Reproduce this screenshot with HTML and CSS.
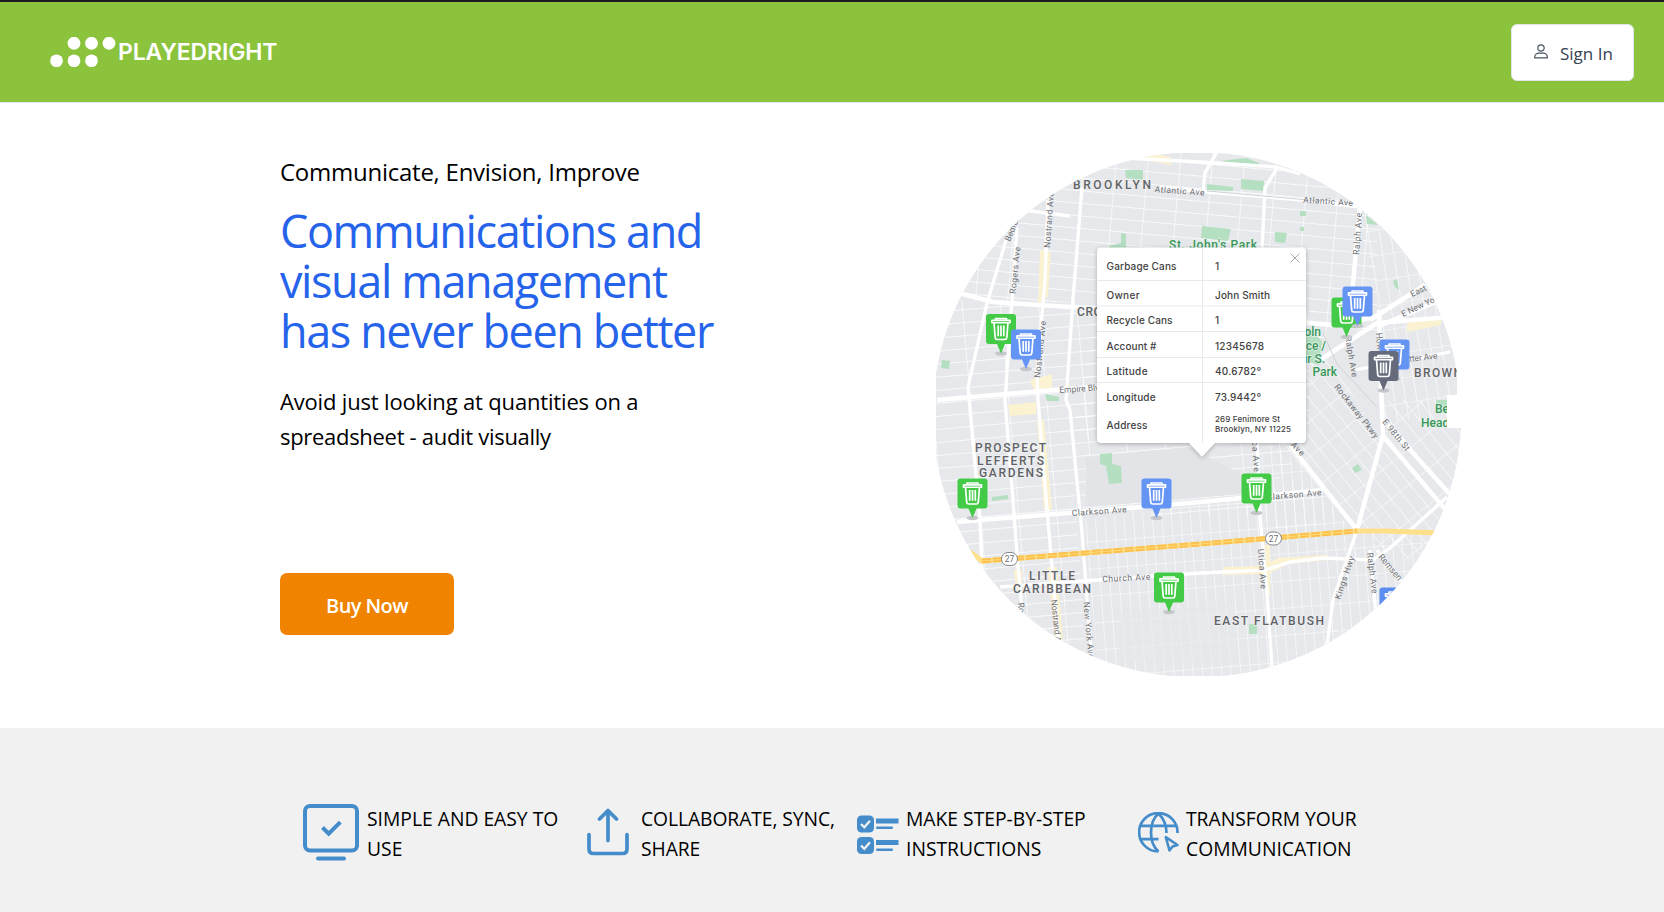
FILE: index.html
```html
<!DOCTYPE html>
<html lang="en">
<head>
<meta charset="utf-8">
<title>PlayedRight</title>
<link rel="stylesheet" href="styles.css">
</head>
<body>
<header class="topbar">
  <a class="brand">
    <svg class="brand-dots" width="66" height="30" viewBox="0 0 66 30" fill="#fff"><circle cx="24" cy="6.3" r="6.4"/><circle cx="41.5" cy="6.3" r="6.4"/><circle cx="59" cy="6.3" r="6.4"/><circle cx="6.5" cy="23.8" r="6.4"/><circle cx="24" cy="23.8" r="6.4"/><circle cx="41.5" cy="23.8" r="6.4"/></svg>
    <span class="brand-name">PLAYEDRIGHT</span>
  </a>
  <a class="signin">
    <svg width="14" height="15" viewBox="0 0 14 15" fill="none" stroke="#4b5563" stroke-width="1.2"><circle cx="7" cy="4" r="3.2"/><path d="M.7 13.9V13c0-2.4 2.2-3.9 4-3.9h4.600c1.800 0 4 1.500 4 3.900v.9z" stroke-linejoin="round"/></svg>
    <span class="signin-label">Sign In</span>
  </a>
</header>

<main class="hero">
  <section class="copy">
    <p class="eyebrow">Communicate, Envision, Improve</p>
    <h1 class="title"><span class="t1">Communications and</span><br><span class="t2">visual management</span><br><span class="t3">has never been better</span></h1>
    <p class="lead"><span class="l1">Avoid just looking at quantities on a</span><br><span class="l2">spreadsheet - audit visually</span></p>
    <a class="buy"><span class="buy-label">Buy Now</span></a>
  </section>
  <svg class="map" width="526" height="524" viewBox="936 153 526 524">
    <defs>
      <clipPath id="disc"><path d="M1175 153H1222A262.500 262.500 0 0 1 1457 373V395H1447V428H1461A262.500 262.500 0 0 1 1222 676H1170A262.500 262.500 0 0 1 1175 153Z"/></clipPath>
      <pattern id="gNorth" width="32" height="12.500" patternUnits="userSpaceOnUse" patternTransform="translate(1048 200) rotate(5)"><path d="M0 0H32M0 0V12.500" stroke="#fff" stroke-width="1.300"/></pattern>
      <pattern id="gWest" width="38" height="13" patternUnits="userSpaceOnUse" patternTransform="translate(970 400) rotate(-5)"><path d="M0 0H38M0 0V13" stroke="#fff" stroke-width="1.300"/></pattern>
      <pattern id="gSouth" width="9.500" height="27" patternUnits="userSpaceOnUse" patternTransform="translate(1085 515) rotate(-4.500)"><path d="M0 0H9.500M0 0V27" stroke="#fff" stroke-width="1.100"/></pattern>
      <pattern id="gDiag" width="12" height="28" patternUnits="userSpaceOnUse" patternTransform="translate(1383 433) rotate(-39)"><path d="M0 0H12M0 0V28" stroke="#fff" stroke-width="1.200"/></pattern>
      <pattern id="gEast" width="11" height="25" patternUnits="userSpaceOnUse" patternTransform="translate(1383 330) rotate(-9)"><path d="M0 0H11M0 0V25" stroke="#fff" stroke-width="1.200"/></pattern>
      <g id="can" fill="none" stroke="#fff" stroke-width="1.700" stroke-linejoin="round"><path d="M-5.500-10.500V-12h11v1.500M-9-7.500v-2.500H9v2.500zM-7-7.500L-5.800 8.500q.2 2 2 2h7.600q1.800 0 2-2L7-7.500M-2.800-4.500V7M0-4.500V7M2.800-4.500V7" /></g>
      <g id="pin"><ellipse cx="0" cy="24" rx="6" ry="2.200" fill="#c4c6ca" stroke="none"/><path d="M-12-15.500h24a3 3 0 0 1 3 3v24a3 3 0 0 1-3 3H4L0 24-4 14.500h-8a3 3 0 0 1-3-3v-24a3 3 0 0 1 3-3z"/><use href="#can" transform="translate(0 .2) scale(1 .93)"/></g>
    </defs>
    <g clip-path="url(#disc)">
      <rect x="930" y="150" width="540" height="530" fill="#e6e8eb"/>
      <path d="M930 150H1377V330L1310 340V307L930 300z" fill="url(#gNorth)"/>
      <path d="M930 300L1097 308V440H1072L1087 680H930z" fill="url(#gWest)"/>
      <path d="M1097 308H1310V440L1250 515H1084L1072 440z" fill="url(#gWest)"/>
      <path d="M1083 520L1240 500 1300 480 1357 532 1328 680H1100z" fill="url(#gSouth)"/>
      <path d="M1262 440L1300 462 1340 510 1300 540 1262 520z" fill="url(#gSouth)"/>
      <path d="M1310 330L1383 440V400L1470 400V580L1377 550 1357 530 1260 420z" fill="url(#gDiag)"/>
      <path d="M1360 200L1470 260V420H1383L1377 310z" fill="url(#gEast)"/>
      <path d="M1357 532L1470 533V640L1328 660z" fill="url(#gSouth)"/>
      <path d="M1086 457L1190 447 1242 475V494L1086 507z" fill="#e2e4e8"/>
      <path d="M1120 613L1235 603V665L1120 660z" fill="#e6e8eb" opacity=".65"/>
      <g fill="#fbf2d2">
        <path d="M1040 250l11 2-3 44-10 8zM1030 380l22-6v16h-18zM1008 405l28-3v12l-26 2zM1037 420h7l8 90h-8zM1047 567h10l6 75h-7zM1014 570h8v20h-6zM1145 160l26 5v-8l-22-4zM1223 567l40-1 15-8 50-3v5l-40 4-20 10-45 1zM1264 545h6v50h-4zM1407 323l34-7v9l-34 7z"/>
      </g>
      <g fill="#b4dfc1">
        <path d="M1125 170h18v10l-17-2zM1220 161l26-3 13 5v2zM1241 179l23 2-1 10-22-2zM1207 184l26 3v4l-26-1zM1202 226l29 3-3 12-27-3zM1275 232l12 1-2 10-10-1zM1109 246l12-3v-10l5 1v14h-17zM1300 211h6v5h-6zM1300 227h4v4h-4zM1366 215l12 10-11-1zM1393 281l4-2 2 11-4-3zM942 360l8 1-1 8-8-1zM1100 454l12-1v11l9 2 1 17-13 1-3-18-6-2zM992 497l16-2v4l-16 2zM1045 394l14 3v4h-12zM1352 468l6-4 4 6-7 3zM1249 624h8v10h-8zM1306 327l16 14-3 24-13-4zM1436 400h12v12h-12z"/>
      </g>
      <g fill="none" stroke="#fff" stroke-width="3.300" stroke-linejoin="round">
        <path d="M1105 157L1200 162 1277 167 1300 174M1218 150L1205 173 1203 192M1277 168L1265 188 1262 250M1082 187L1073 300 1066 400 1070 410 1082 533 1087 600 1092 660M1048 200L1045 280 1037 373 1038 400 1047 510 1052 567 1060 660M1017 227L1012 300 1005 400 1013 500 1018 567 1024 630"/>
        <path d="M1007 237L987 303 968 387 980 520 982 570M1007 208L1070 216"/>
        <path d="M955 292L993 302 1070 307 1110 309M1300 322L1333 325 1370 318M937 400L1053 390 1097 387M957 522L1190 503 1242 498 1323 490" stroke-width="4.500"/>
        <path d="M1000 587L1097 580 1200 573 1248 571 1265 570 1290 562 1323 558 1373 560 1390 548 1447 497M1257 435L1260 517 1267 593 1272 667M1357 530L1333 600 1325 660M1370 550L1377 625M1377 550L1415 600"/>
        <path d="M1379 310L1380 360 1383 435 1357 530M1290 445L1357 530M1383 436L1450 515M1388 425L1455 500M1360 207L1353 283 1350 327M1320 360L1377 323 1450 317M1370 320L1425 285M1377 327L1440 300" stroke-width="4.500"/>
        <path d="M1355 370L1450 352M1160 187L1207 192 1303 200 1400 212" />
      </g>
      <path d="M1207 191L1320 201M1323 333L1337 364 1377 407" fill="none" stroke="#cfd1d4"/>
      <path d="M970 552L982 561 1200 544 1357 531 1385 531 1465 534" fill="none" stroke="#ffe08a" stroke-width="5.200"/>
      <path d="M982 561L1200 544 1357 531" fill="none" stroke="#fbc04d" stroke-width="4.800" stroke-dasharray="9 2"/>
      <path d="M982 561L1200 544 1357 531" fill="none" stroke="#ffd977" stroke-width="1"/>
      <g class="shield"><rect x="1001.500" y="552.500" width="16" height="13" rx="6.500"/><rect x="1265.500" y="532" width="16" height="13" rx="6.500"/></g>
      <g class="road">
        <text x="1009.500" y="562" text-anchor="middle">27</text><text x="1273.500" y="541.500" text-anchor="middle">27</text>
        <text transform="translate(1154.500 192) rotate(4)" textLength="50">Atlantic Ave</text>
        <text transform="translate(1303 202.500) rotate(4)" textLength="50">Atlantic Ave</text>
        <text transform="translate(1050 248) rotate(-86)" textLength="56">Nostrand Ave</text>
        <text transform="translate(1015.500 294) rotate(-84)" textLength="47">Rogers Ave</text>
        <text transform="translate(1010 242) rotate(-68)">Bedford</text>
        <text transform="translate(1040 378) rotate(-84)" textLength="57">Nostrand Ave</text>
        <text transform="translate(1059.500 393) rotate(-4)">Empire Blvd</text>
        <text transform="translate(1072 516) rotate(-4)" textLength="55">Clarkson Ave</text>
        <text transform="translate(1267 500) rotate(-5)" textLength="55">Clarkson Ave</text>
        <text transform="translate(1102.500 582) rotate(-3)" textLength="48">Church Ave</text>
        <text transform="translate(1018 603) rotate(84)">Rogers Ave</text>
        <text transform="translate(1051 600) rotate(84)">Nostrand Ave</text>
        <text transform="translate(1083.500 602) rotate(85)" textLength="57">New York Ave</text>
        <text transform="translate(1251 428) rotate(86)" textLength="44">Utica Ave</text>
        <text transform="translate(1258 549) rotate(86)" textLength="40">Utica Ave</text>
        <text transform="translate(1267 420) rotate(47)" textLength="50">Albany Ave</text>
        <text transform="translate(1359 255) rotate(-86)" textLength="42">Ralph Ave</text>
        <text transform="translate(1345 337) rotate(80)" textLength="41">Ralph Ave</text>
        <text transform="translate(1334 387) rotate(52)" textLength="66">Rockaway Pkwy</text>
        <text transform="translate(1382 422) rotate(51)" textLength="38">E 98th St</text>
        <text transform="translate(1340 600) rotate(-71)" textLength="45">Kings Hwy</text>
        <text transform="translate(1367 553) rotate(83)" textLength="41">Ralph Ave</text>
        <text transform="translate(1378 557) rotate(50)" textLength="48">Remsen Ave</text>
        <text transform="translate(1412 297) rotate(-25)">East New York</text>
        <text transform="translate(1403 317) rotate(-25)">E New York</text>
        <text transform="translate(1376 333) rotate(86)">Howard</text>
        <text transform="translate(1400 363) rotate(-7)" textLength="38">Sutter Ave</text>
      </g>
      <g class="place">
        <text x="1073" y="189" textLength="78" font-size="12.500">BROOKLYN</text>
        <text x="1077" y="316" textLength="102">CROWN HEIGHTS</text>
        <text x="975" y="452" textLength="71">PROSPECT</text><text x="977" y="464.500" textLength="67">LEFFERTS</text><text x="979" y="476.500" textLength="64">GARDENS</text>
        <text x="1029" y="580" textLength="46">LITTLE</text><text x="1013" y="592.500" textLength="78">CARIBBEAN</text>
        <text x="1214" y="625" textLength="110">EAST FLATBUSH</text>
        <text x="1414" y="377" textLength="48">BROWN</text>
      </g>
      <g class="park">
        <text x="1169" y="249" textLength="88">St. John's Park</text>
        <g text-anchor="end"><text x="1321" y="336">Lincoln</text><text x="1326" y="349.500">Terrace /</text><text x="1325" y="363">Arthur S.</text><text x="1337" y="376">Park</text></g>
        <text x="1435" y="413">Betsy</text><text x="1421" y="427">Head Park</text>
      </g>
      <use href="#pin" x="1001" y="329.500" fill="#43cb48"/><use href="#pin" x="1026" y="345" fill="#6494f4"/>
      <use href="#pin" x="972.500" y="494" fill="#43cb48"/><use href="#pin" x="1156.500" y="494" fill="#6494f4"/>
      <use href="#pin" x="1256.500" y="489" fill="#43cb48"/><use href="#pin" x="1169" y="588" fill="#43cb48"/>
      <use href="#pin" x="1346.500" y="313" fill="#43cb48"/><use href="#pin" x="1357.500" y="302" fill="#6494f4"/>
      <use href="#pin" x="1394.500" y="355" fill="#6494f4"/><use href="#pin" x="1383.500" y="366.500" fill="#656b7b"/>
      <use href="#pin" x="1394.500" y="603" fill="#5b8def"/>
      <g class="popup">
        <path class="popup-card" d="M1101 247.500H1302a4 4 0 0 1 4 4V439a4 4 0 0 1-4 4H1215L1202 457 1189 443H1101a4 4 0 0 1-4-4V251.500a4 4 0 0 1 4-4z"/>
        <path d="M1097 280.500H1306M1097 306H1306M1097 331.500H1306M1097 357.500H1306M1097 382.500H1306M1202.500 248V443" stroke="#e8ebed" fill="none"/>
        <path d="M1290.500 253.500l9 9m0-9l-9 9" stroke="#aaa" fill="none"/>
        <text x="1106.500" y="270" textLength="70">Garbage Cans</text><text x="1215" y="270">1</text>
        <text x="1106.500" y="298.500" textLength="33">Owner</text><text x="1215" y="298.500" textLength="55">John Smith</text>
        <text x="1106.500" y="324" textLength="66">Recycle Cans</text><text x="1215" y="324">1</text>
        <text x="1106.500" y="349.500" textLength="50">Account #</text><text x="1215" y="349.500" textLength="49">12345678</text>
        <text x="1106.500" y="375" textLength="41">Latitude</text><text x="1215" y="375" textLength="46">40.6782°</text>
        <text x="1106.500" y="400.500" textLength="49">Longitude</text><text x="1215" y="400.500" textLength="46">73.9442°</text>
        <text x="1106.500" y="429" textLength="41">Address</text>
        <text class="small" x="1215" y="421.500" textLength="65">269 Fenimore St</text><text class="small" x="1215" y="432" textLength="76">Brooklyn, NY 11225</text>
      </g>
    </g>
  </svg>
</main>

<section class="features">
  <article class="feature f-easy">
    <svg width="56" height="57" viewBox="0 0 56 57" fill="none" stroke="#448cca" stroke-width="4" stroke-linecap="round" stroke-linejoin="round"><rect x="2" y="2" width="52" height="44.500" rx="5"/><path d="M15 54.500H41"/><path d="M19.500 23.500l6.200 6.200L37.300 18.200" stroke-linecap="butt" stroke-linejoin="miter"/></svg>
    <p><span>SIMPLE AND EASY TO</span><br><span>USE</span></p>
  </article>
  <article class="feature f-share">
    <svg width="42" height="48" viewBox="0 0 42 48" fill="none" stroke="#448cca" stroke-width="3.700" stroke-linecap="round" stroke-linejoin="round"><path d="M21 32.500V2.500M12.500 11L21 2.500 29.500 11M2 26.500V41q0 4.500 4.500 4.500H35.500q4.500 0 4.500-4.500V26.500"/></svg>
    <p><span>COLLABORATE, SYNC,</span><br><span>SHARE</span></p>
  </article>
  <article class="feature f-steps">
    <svg width="42" height="39" viewBox="0 0 42 39" fill="#448cca"><rect width="17" height="17" y=".5" rx="4.500"/><rect y="22" width="17" height="17" rx="4.500"/><path d="M19 3.500H41.500V8.500H19zM19 25H41.500V30H19z"/><rect x="19" y="11.500" width="17" height="2.500" rx="1.200"/><rect x="19" y="33.500" width="17" height="2.500" rx="1.200"/><path d="M4 9l3.300 3.300L13 5.800M4 30.500l3.300 3.300L13 27.300" fill="none" stroke="#f1f1f1" stroke-width="2.300"/></svg>
    <p><span>MAKE STEP-BY-STEP</span><br><span>INSTRUCTIONS</span></p>
  </article>
  <article class="feature f-globe">
    <svg width="42" height="41" viewBox="0 0 42 41" fill="none" stroke="#448cca" stroke-width="2.700" stroke-linecap="round" stroke-linejoin="round"><path d="M39.500 21A19.200 19.200 0 1 0 20.500 39.500M20.500 39.500C10.500 31 10.500 10 20.500 1.500C25 6 28.500 13 28.500 21M3 13.800H38.200M3 27.200H20.500" stroke-linecap="butt"/><path d="M27.800 25.200L31.500 38.500 34.500 34.500 39.500 33z" stroke-width="2.600"/></svg>
    <p><span>TRANSFORM YOUR</span><br><span>COMMUNICATION</span></p>
  </article>
</section>
</body>
</html>
```
FILE: styles.css
```css
* { box-sizing: border-box; }
body { margin: 0; height: 912px; display: flex; flex-direction: column; background: #fff; color: #000; font-family: "Open Sans", "Noto Sans", sans-serif; overflow: hidden; }
p, h1 { margin: 0; }
.topbar { height: 103px; flex: none; background: #8bc33c; border-top: 2px solid #1b1b20; border-bottom: 1px solid #e4e7eb; display: flex; justify-content: space-between; align-items: flex-start; padding: 22px 30px 0 50px; }
.brand { display: flex; align-items: center; padding-top: 13px; }
.brand-dots { flex: none; }
.brand-name { font: 600 23px/30px Inter, sans-serif; letter-spacing: -.12px; color: #fff; margin-left: 2px; white-space: nowrap; }
.signin { width: 123px; height: 57px; background: #fff; border: 1px solid #e2e5ea; border-radius: 6px; display: flex; align-items: center; padding-left: 22px; gap: 12px; color: #374151; font-size: 17px; }
.signin svg { margin-bottom: 2px; }
.signin-label { white-space: nowrap; padding-top: 2px; }
.hero { height: 625px; flex: none; display: flex; justify-content: space-between; padding: 50px 202px 0 280px; }
.copy { width: 500px; white-space: nowrap; }
.eyebrow { font-size: 24px; line-height: 36px; padding-top: 1px; letter-spacing: -.25px; }
.title { font-size: 45px; line-height: 50px; font-weight: 400; color: #2563eb; margin-top: 16px; letter-spacing: -1.4px; }
.lead { font-size: 22px; line-height: 35px; margin-top: 28px; }
.l1 { letter-spacing: -.17px; }
.l2 { letter-spacing: -.3px; }
.buy { display: flex; width: 174px; height: 62px; margin-top: 119px; align-items: center; justify-content: center; background: #f08300; border-radius: 7px; color: #fff; font-weight: 600; font-size: 20px; }
.buy-label { letter-spacing: -.6px; padding-top: 2px; }
.map { flex: none; display: block; }
.road text { font: 400 8.500px Roboto, sans-serif; fill: #6c6e72; }
.road { stroke: none; }
.shield rect { fill: #fff; stroke: #85878b; }
.place text { font: 500 12px Roboto, sans-serif; fill: #606266; paint-order: stroke; stroke: #f0f1f3; stroke-width: 1.500px; }
.park text { font: 500 12px Roboto, sans-serif; fill: #39965a; paint-order: stroke; stroke: #e8f3ec; stroke-width: 1.500px; }
.popup text { font: 500 10px Inter, sans-serif; fill: #414141; }
.popup .small { font-size: 8px; }
.popup-card { fill: #fff; filter: drop-shadow(0 1px 2px rgba(0, 0, 0, .28)); }
.features { flex: 1; background: #f1f1f1; display: grid; grid-template-columns: 283px 271px 281px 1fr; padding: 76px 0 0 303px; font-size: 19.3px; line-height: 30px; white-space: nowrap; }
.feature { display: flex; align-items: flex-start; }
.feature svg { flex: none; }
.f-easy p { margin-left: 8px; }
.f-share p { margin-left: 13px; letter-spacing: -.08px; }
.f-steps p { margin-left: 7px; }
.f-globe p { margin-left: 6px; }
.f-share svg { margin: 4px -1px 0 1px; }
.f-steps svg { margin-top: 11px; }
.f-globe svg { margin-top: 8px; }
```
